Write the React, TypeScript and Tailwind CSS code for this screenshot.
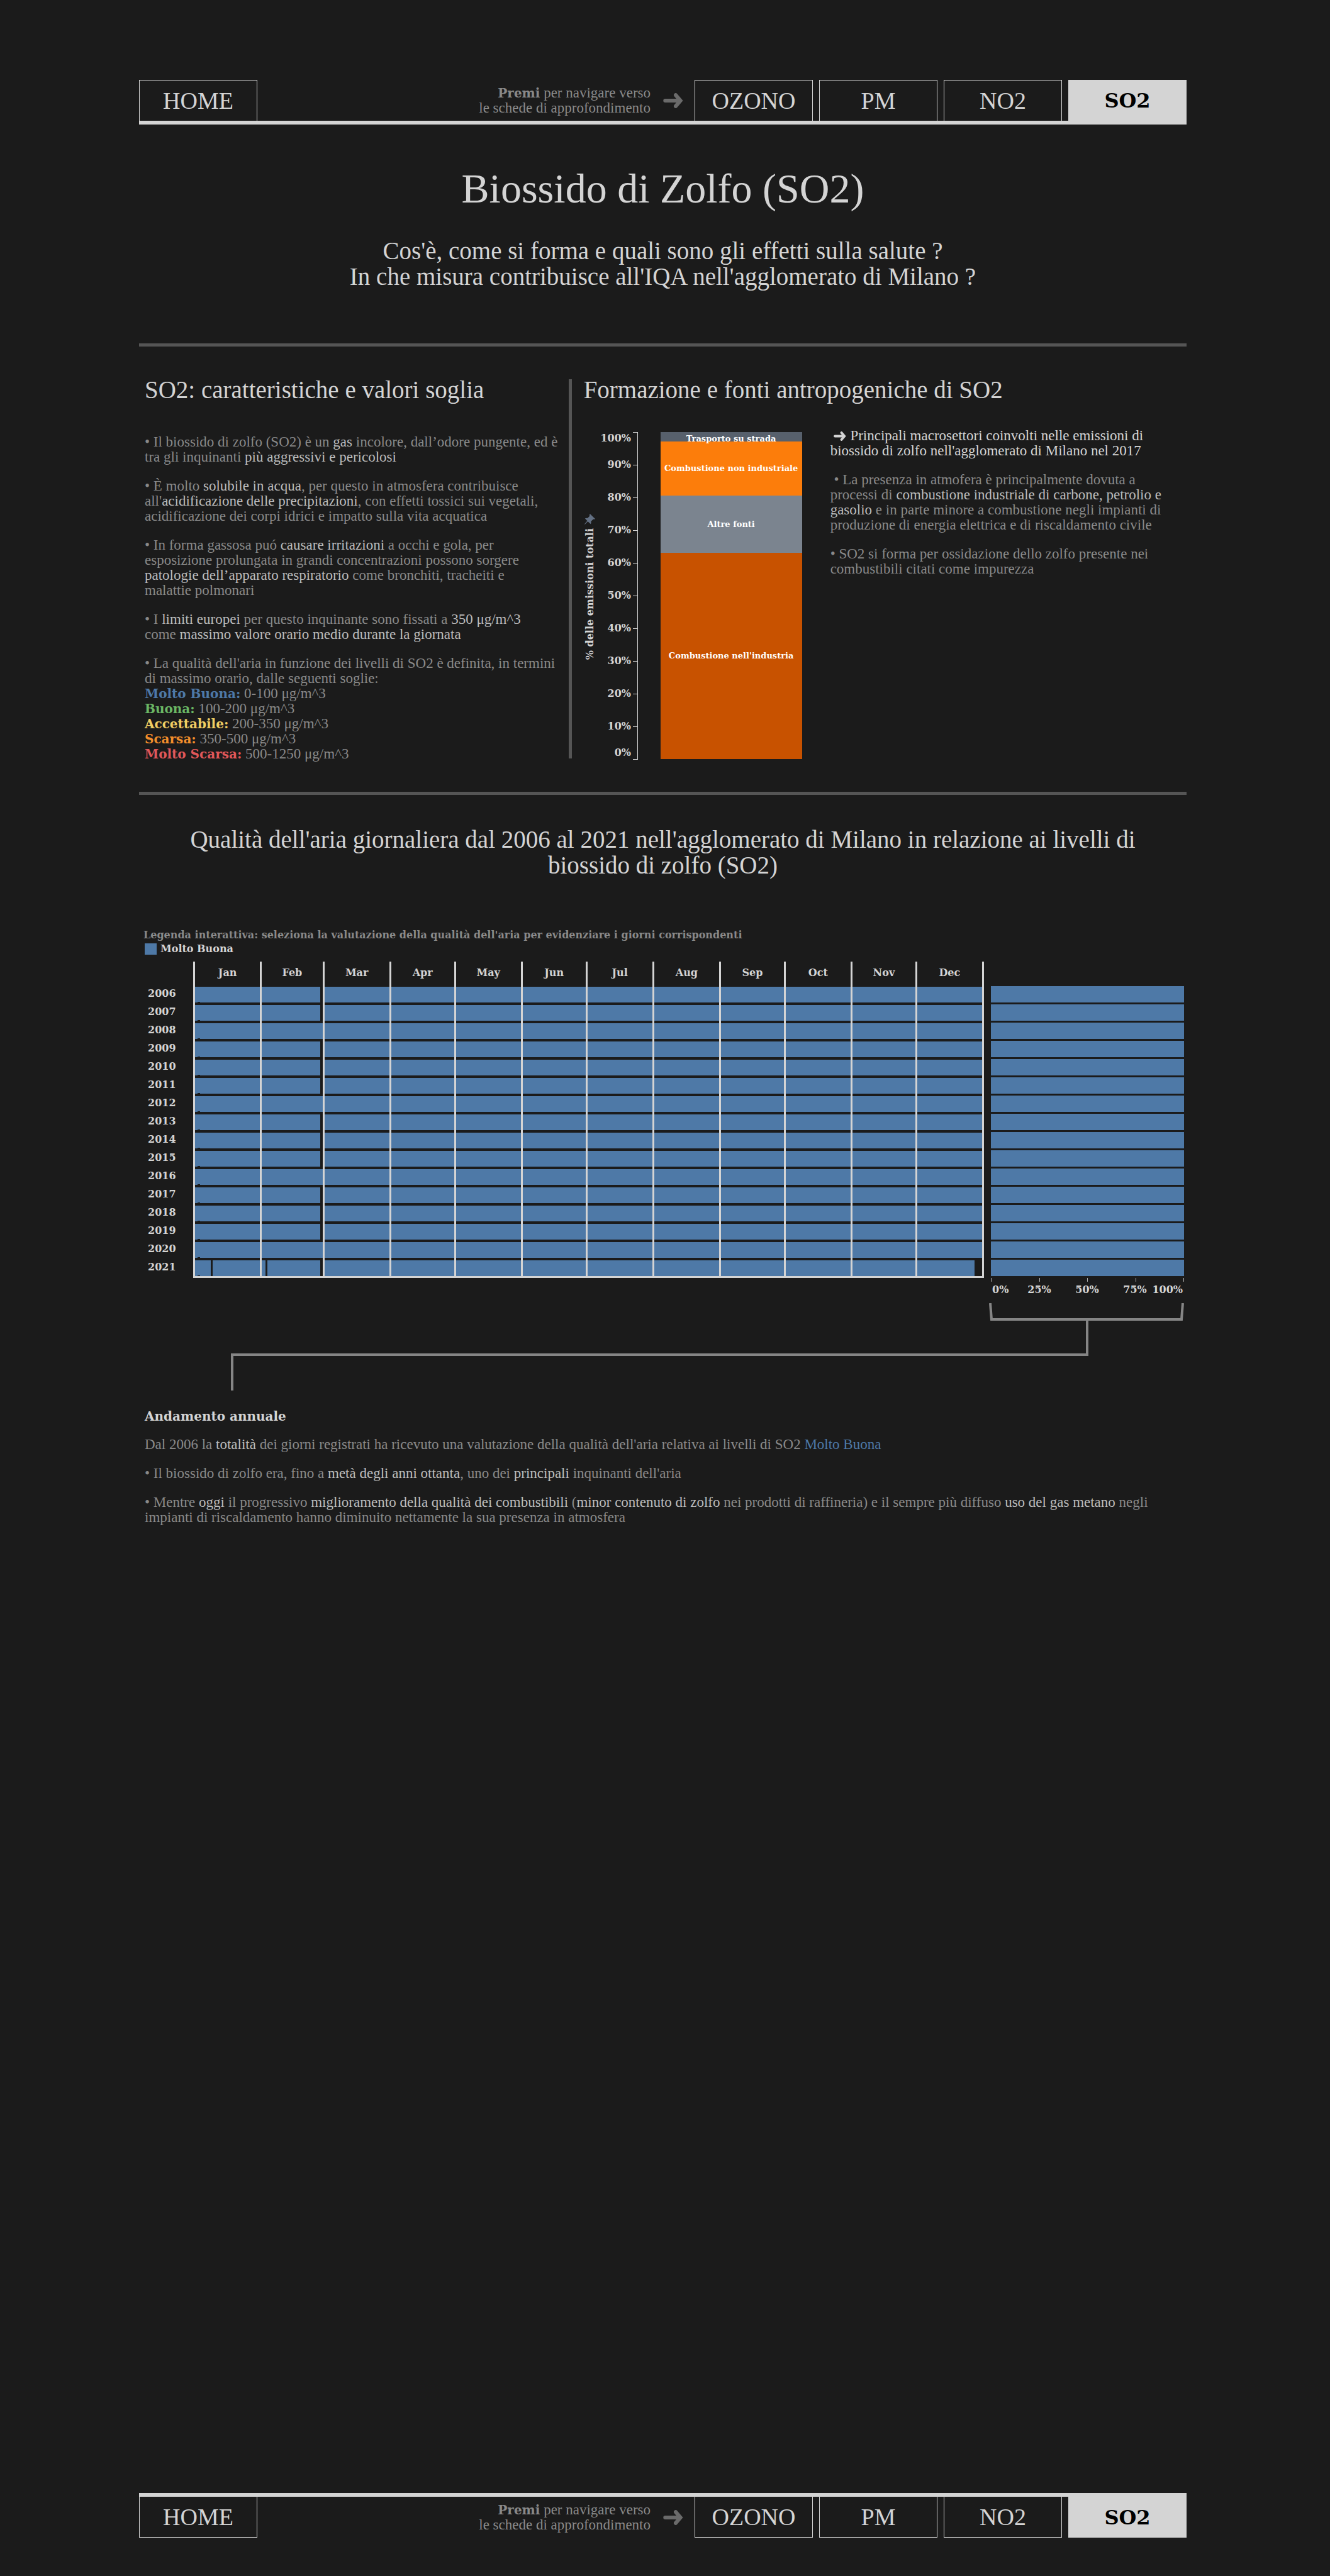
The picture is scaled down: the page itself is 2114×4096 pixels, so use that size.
import type { ReactNode } from "react";

const NAV = ["OZONO", "PM", "NO2", "SO2"];

const MONTHS: { name: string; days: number }[] = [
  { name: "Jan", days: 31 },
  { name: "Feb", days: 29 },
  { name: "Mar", days: 31 },
  { name: "Apr", days: 30 },
  { name: "May", days: 31 },
  { name: "Jun", days: 30 },
  { name: "Jul", days: 31 },
  { name: "Aug", days: 31 },
  { name: "Sep", days: 30 },
  { name: "Oct", days: 31 },
  { name: "Nov", days: 30 },
  { name: "Dec", days: 31 },
];

const YEARS = Array.from({ length: 16 }, (_, i) => 2006 + i);

const THRESHOLDS = [
  { label: "Molto Buona:", range: "0-100", color: "text-[#4e79a7]" },
  { label: "Buona:", range: "100-200", color: "text-[#6bb865]" },
  { label: "Accettabile:", range: "200-350", color: "text-[#f1ce63]" },
  { label: "Scarsa:", range: "350-500", color: "text-[#f28e2b]" },
  { label: "Molto Scarsa:", range: "500-1250", color: "text-[#e15759]" },
];

/** Days without a reading, as [first day offset, length] inside a month. */
function missingDays(year: number, month: string): [number, number][] {
  const gaps: [number, number][] = [];
  if (month === "Feb" && year % 4 !== 0) gaps.push([28, 1]);
  if (year === 2021) {
    if (month === "Jan") gaps.push([7.4, 0.9]);
    if (month === "Feb") gaps.push([1.6, 0.9]);
    if (month === "Dec") gaps.push([27.5, 3.5]);
  }
  return gaps;
}

function Arrow({ className }: { className: string }) {
  return (
    <svg viewBox="0 0 140 106" className={className} aria-hidden="true" fill="none" stroke="currentColor" strokeWidth="27">
      <path d="M14 53H108" strokeLinecap="round" />
      <path d="M88 14L121 53L88 92" strokeLinecap="round" strokeMiterlimit="10" />
    </svg>
  );
}

function Hi({ children }: { children: ReactNode }) {
  return <span className="text-[#bcbcbc]">{children}</span>;
}

function Tab({ name, side, active = false }: { name: string; side: "top" | "bottom"; active?: boolean }) {
  const edge = side === "top" ? "border-t" : "border-b";
  return (
    <a
      href={`#${name.toLowerCase()}`}
      aria-current={active ? "page" : undefined}
      className={
        active
          ? "flex h-[65px] w-[188px] items-center justify-center bg-[#d4d4d4] font-['DejaVu_Serif',serif] text-[32px] leading-none font-bold text-black"
          : `flex h-[65px] w-[188px] items-center justify-center border-x border-[#d4d4d4] text-[38px] leading-[42px] ${edge}`
      }
    >
      {name}
    </a>
  );
}

function NavBar({ side }: { side: "top" | "bottom" }) {
  return (
    <nav
      aria-label={side === "top" ? "Navigazione principale" : "Navigazione a fondo pagina"}
      className={`flex items-center justify-between border-[#d4d4d4] ${side === "top" ? "border-b-6" : "border-t-6"}`}
    >
      <Tab name="HOME" side={side} />
      <div className="flex items-center">
        <p className="text-right text-[23px] leading-6 text-[#898989]">
          <b className="font-['DejaVu_Serif',serif] text-[20px] leading-none">Premi</b> per navigare verso
          <br />
          le schede di approfondimento
        </p>
        <Arrow className="mr-[18px] ml-5 h-6 w-8 text-[#6a6a6a]" />
        <div className="flex gap-[10px]">
          {NAV.map((n) => (
            <Tab key={n} name={n} side={side} active={n === "SO2"} />
          ))}
        </div>
      </div>
    </nav>
  );
}

function Characteristics() {
  return (
    <div className="mt-[49px] space-y-[22px] text-[23px] leading-6 whitespace-nowrap text-[#898989]">
      <p>
        • Il biossido di zolfo (SO2) è un <Hi>gas</Hi> incolore, dall’odore pungente, ed è
        <br />
        tra gli inquinanti <Hi>più aggressivi e pericolosi</Hi>
      </p>
      <p>
        • È molto <Hi>solubile in acqua</Hi>, per questo in atmosfera contribuisce
        <br />
        all'<Hi>acidificazione delle precipitazioni</Hi>, con effetti tossici sui vegetali,
        <br />
        acidificazione dei corpi idrici e impatto sulla vita acquatica
      </p>
      <p>
        • In forma gassosa puó <Hi>causare irritazioni</Hi> a occhi e gola, per
        <br />
        esposizione prolungata in grandi concentrazioni possono sorgere
        <br />
        <Hi>patologie dell’apparato respiratorio</Hi> come bronchiti, tracheiti e
        <br />
        malattie polmonari
      </p>
      <p>
        • I <Hi>limiti europei</Hi> per questo inquinante sono fissati a <Hi>350 μg/m^3</Hi>
        <br />
        come <Hi>massimo valore orario medio durante la giornata</Hi>
      </p>
      <div>
        <p>
          • La qualità dell'aria in funzione dei livelli di SO2 è definita, in termini
          <br />
          di massimo orario, dalle seguenti soglie:
        </p>
        <ul>
          {THRESHOLDS.map((t) => (
            <li key={t.label}>
              <b className={`font-['DejaVu_Serif',serif] text-[20px] leading-none ${t.color}`}>{t.label}</b> {t.range} μg/m^3
            </li>
          ))}
        </ul>
      </div>
    </div>
  );
}

function SourcesChart() {
  const segment = "flex justify-center whitespace-nowrap";
  return (
    <figure className="mt-[6px] flex" aria-label="Percentuale delle emissioni totali per macrosettore">
      <div className="flex w-5 shrink-0 flex-col items-center justify-center pb-7">
        <svg viewBox="0 0 74 75" className="mb-[6px] h-[17px] w-[17px] shrink-0" aria-hidden="true">
          <path
            fill="#637083"
            d="M38 0L74 35C70 39 66 39 62 38L45 53C47 60 46 67 43 72L23 54L2 75L0 72L19 50L3 32C9 29 16 29 22 30L36 15C34 9 35 4 38 0Z"
          />
        </svg>
        <span className="rotate-180 font-['DejaVu_Serif',serif] text-[16px] leading-5 font-bold whitespace-nowrap [writing-mode:vertical-rl]">
          % delle emissioni totali
        </span>
      </div>
      <svg className="h-[521px] w-[66px] shrink-0" viewBox="0 0 66 521" role="img" aria-label="Asse da 0% a 100%">
        <path d="M65.5 0.5V520.5" stroke="#d4d4d4" />
        {Array.from({ length: 11 }, (_, i) => {
          const y = 520 - i * 52;
          const baseline = i === 10 ? 15 : i === 0 ? 515 : y + 5;
          return (
            <g key={i}>
              <path d={`M58 ${y + 0.5}H66`} stroke="#d4d4d4" />
              <text x="55" y={baseline} textAnchor="end" fill="#d4d4d4" className="font-['DejaVu_Serif',serif] text-[16px] font-bold">
                {i * 10}%
              </text>
            </g>
          );
        })}
      </svg>
      <div className="ml-9 flex h-[520px] w-[225px] shrink-0 flex-col font-['DejaVu_Serif',serif] text-[13px] leading-4 font-bold text-white">
        <div className={`${segment} relative z-10 h-[15px] bg-[#57606c] pt-[3px]`}>Trasporto su strada</div>
        <div className={`${segment} h-[86px] items-center bg-[#fc7d0b]`}>Combustione non industriale</div>
        <div className={`${segment} h-[91px] items-center bg-[#7b848f]`}>Altre fonti</div>
        <div className={`${segment} flex-1 items-center bg-[#c85200]`}>Combustione nell'industria</div>
      </div>
    </figure>
  );
}

function SourcesText() {
  return (
    <div className="ml-[45px] space-y-[22px] text-[23px] leading-6 whitespace-nowrap text-[#898989]">
      <p className="text-[#d4d4d4]">
        &nbsp;
        <Arrow className="mr-[6px] mb-[2px] inline-block h-[15px] w-5" />
        Principali macrosettori coinvolti nelle emissioni di
        <br />
        biossido di zolfo nell'agglomerato di Milano nel 2017
      </p>
      <p>
        &nbsp;• La presenza in atmofera è principalmente dovuta a
        <br />
        processi di <Hi>combustione industriale di carbone, petrolio e</Hi>
        <br />
        <Hi>gasolio</Hi> e in parte minore a combustione negli impianti di
        <br />
        produzione di energia elettrica e di riscaldamento civile
      </p>
      <p>
        • SO2 si forma per ossidazione dello zolfo presente nei
        <br />
        combustibili citati come impurezza
      </p>
    </div>
  );
}

function Calendar() {
  return (
    <div className="mt-[9px] flex pr-1 font-['DejaVu_Serif',serif] text-[16px] font-bold">
      <div className="w-[86px] shrink-0 pt-10 pl-[14px] leading-[22px]">
        {YEARS.map((y) => (
          <div key={y} className="h-[29px]">
            {y}
          </div>
        ))}
      </div>
      <div className="grid flex-1 grid-cols-[31fr_29fr_31fr_30fr_31fr_30fr_31fr_31fr_30fr_31fr_30fr_31fr] self-start border-r-3 border-b-3 border-[#d4d4d4]">
        {MONTHS.map((m) => (
          <div key={m.name} className="border-l-3 border-[#d4d4d4]">
            <div className="h-10 pt-2 text-center leading-5">{m.name}</div>
            <div className="space-y-1">
              {YEARS.map((y) => (
                <div key={y} className="relative h-[25px] bg-[#4e79a7]">
                  {missingDays(y, m.name).map(([start, length]) => (
                    <span
                      key={start}
                      className="absolute inset-y-0 bg-[#1b1b1b]"
                      style={{ left: `${(start / m.days) * 100}%`, width: `${(length / m.days) * 100}%` }}
                    />
                  ))}
                  {m.name === "Jan" && <span className="absolute bottom-0 left-1 h-px w-1 bg-[#1b1b1b]" />}
                </div>
              ))}
            </div>
          </div>
        ))}
      </div>
      <div className="ml-[11px] w-[307px] shrink-0 pt-[39px]">
        <div className="space-y-[3px]">
          {YEARS.map((y) => (
            <div key={y} className="h-[26px] bg-[#4e79a7]" title={`${y}: 100%`} />
          ))}
        </div>
        <svg viewBox="0 0 307 32" className="mt-[3px] block w-full overflow-visible" role="img" aria-label="Asse da 0% a 100%">
          <path d="M0.5 0V6M77.5 0V6M153.5 0V6M230.5 0V6M306.5 0V6" stroke="#b0b0b0" />
          <g fill="#d4d4d4" textAnchor="middle">
            <text x="2" y="24" textAnchor="start">0%</text>
            <text x="77" y="24">25%</text>
            <text x="153" y="24">50%</text>
            <text x="229" y="24">75%</text>
            <text x="305" y="24" textAnchor="end">100%</text>
          </g>
        </svg>
      </div>
    </div>
  );
}

export default function App() {
  return (
    <div className="flex min-h-screen flex-col bg-[#1b1b1b] pt-[127px] pr-[228px] pb-[61px] pl-[221px] font-['Liberation_Serif',serif] text-[#d4d4d4]">
      <NavBar side="top" />

      <main>
        <h1 className="mt-16 text-center text-[66px] leading-[76px]">Biossido di Zolfo (SO2)</h1>
        <p className="mt-10 text-center text-[39px] leading-[41px]">
          Cos'è, come si forma e quali sono gli effetti sulla salute ?
          <br />
          In che misura contribuisce all'IQA nell'agglomerato di Milano ?
        </p>
        <hr className="mt-[86px] h-[5px] border-0 bg-[#555555]" />

        <div className="flex pt-[47px]">
          <section className="w-[41%] pl-[9px]">
            <h2 className="text-[39px] leading-[44px]">SO2: caratteristiche e valori soglia</h2>
            <Characteristics />
          </section>
          <div className="my-[5px] w-[5px] shrink-0 bg-[#555555]" />
          <section className="flex-1 pl-[19px]">
            <h2 className="text-[39px] leading-[44px]">Formazione e fonti antropogeniche di SO2</h2>
            <div className="mt-[39px] flex items-start">
              <SourcesChart />
              <SourcesText />
            </div>
          </section>
        </div>

        <hr className="mt-12 h-[5px] border-0 bg-[#555555]" />

        <section>
          <h2 className="mt-[50px] text-center text-[39px] leading-[41px]">
            Qualità dell'aria giornaliera dal 2006 al 2021 nell'agglomerato di Milano in relazione ai livelli di
            <br />
            biossido di zolfo (SO2)
          </h2>
          <div className="mt-20 pl-[7px] font-['DejaVu_Serif',serif] text-[16px] leading-[22px] font-bold">
            <p className="text-[#898989]">
              Legenda interattiva: seleziona la valutazione della qualità dell'aria per evidenziare i giorni corrispondenti
            </p>
            <button type="button" className="flex items-center gap-[6px] pl-[2px]">
              <span className="h-[18px] w-[19px] bg-[#4e79a7]" />
              Molto Buona
            </button>
          </div>
          <Calendar />
        </section>

        <svg viewBox="0 0 1665 139" className="mt-2 block w-full" aria-hidden="true" fill="none" stroke="#858585" strokeWidth="4">
          <path d="M1353 0L1355 26H1657L1659 0M1507 26V82H148V139" />
        </svg>

        <section className="mt-[29px] pl-[9px] text-[23px] leading-6 text-[#898989]">
          <h2 className="font-['DejaVu_Serif',serif] text-[20px] leading-6 font-bold text-[#d4d4d4]">Andamento annuale</h2>
          <div className="mt-[21px] space-y-[22px]">
            <p>
              Dal 2006 la <Hi>totalità</Hi> dei giorni registrati ha ricevuto una valutazione della qualità dell'aria relativa ai livelli di SO2{" "}
              <span className="text-[#4e79a7]">Molto Buona</span>
            </p>
            <p>
              • Il biossido di zolfo era, fino a <Hi>metà degli anni ottanta</Hi>, uno dei <Hi>principali</Hi> inquinanti dell'aria
            </p>
            <p>
              • Mentre <Hi>oggi</Hi> il progressivo <Hi>miglioramento della qualità dei combustibili</Hi> (<Hi>minor contenuto di zolfo</Hi> nei
              prodotti di raffineria) e il sempre più diffuso <Hi>uso del gas metano</Hi> negli
              <br />
              impianti di riscaldamento hanno diminuito nettamente la sua presenza in atmosfera
            </p>
          </div>
        </section>
      </main>

      <footer className="mt-auto">
        <NavBar side="bottom" />
      </footer>
    </div>
  );
}
